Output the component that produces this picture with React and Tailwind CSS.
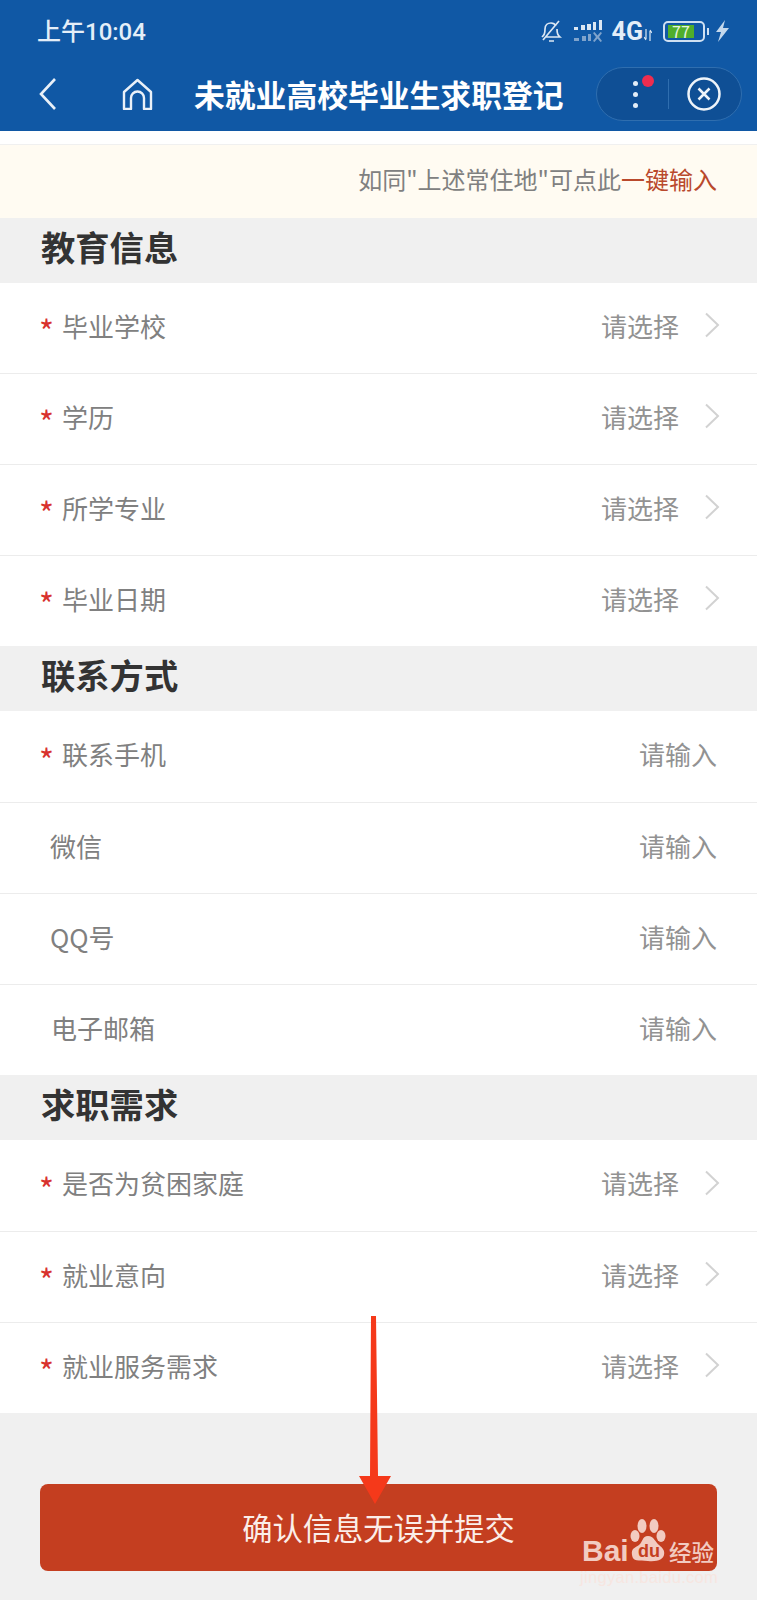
const fontStack = { fontFamily: '"Noto Sans CJK SC", sans-serif' };

const Chevron = () => (
  <svg width="16" height="26" viewBox="0 0 16 26" fill="none" className="ml-[25px] mr-[-3px]">
    <path d="M2 1.500 14 13 2 24.500" stroke="#d2d2d2" strokeWidth="2" />
  </svg>
);

const Row = ({ label, required, value, arrow, last, height = "h-[91px]", indent = "pl-[50px]" }) => (
  <div
    className={`flex items-center bg-white pb-[6px] pr-[40px] ${height} ${
      required ? "pl-[39px]" : indent
    } ${last ? "" : "border-b border-[#ececec]"}`}
  >
    {required && (
      <span className="mr-[10px] mt-[10px] w-[13px] text-[32px] leading-none text-[#d8322e]">*</span>
    )}
    <span className="text-[26px] text-[#808080]">{label}</span>
    <span className="ml-auto text-[26px] text-[#929292]">{value}</span>
    {arrow && <Chevron />}
  </div>
);

const Section = ({ title }) => (
  <div className="flex h-[65px] items-center bg-[#f0f0f0] pb-[8px] pl-[41px] text-[34.300px] font-bold text-[#333333]">
    {title}
  </div>
);

const StatusBar = () => (
  <div className="flex h-[62px] items-center pl-[37px] pr-[27px] text-[#e4eef8]">
    <span
      className="mt-[1px] text-[24px] font-medium"
      style={{ fontFamily: 'Roboto, "Noto Sans CJK SC", sans-serif' }}
    >
      上午10:04
    </span>
    <div className="ml-auto flex items-center">
      <svg width="24" height="24" viewBox="0 0 24 24" fill="none" stroke="#dbe7f3" strokeWidth="1.700">
        <path d="M3 18c2-2 3-3 3-8 0-4 3-6 6-6 2 0 4 1 5 3M18 10c0 5 1 6 3 8H6M10 22h5M4 21 20 2" />
      </svg>
      <svg width="30" height="24" viewBox="0 0 30 24" className="ml-[10px]">
        <g fill="#dbe7f3">
          <rect x="1" y="8" width="4" height="3" />
          <rect x="8" y="6" width="4" height="5" />
          <rect x="14" y="5" width="4" height="6" />
          <rect x="20" y="3" width="3" height="8" />
          <rect x="26" y="1" width="3" height="10" />
        </g>
        <g fill="#7fa3cc">
          <rect x="1" y="19" width="5" height="3" />
          <rect x="9" y="17" width="4" height="5" />
          <rect x="15" y="15" width="3" height="7" />
          <path d="m20 14 1.500-1 3 3.500 3-3.500 1.500 1-3 4 3 4-1.500 1-3-3.500-3 3.500-1.500-1 3-4z" />
        </g>
      </svg>
      <span
        className="ml-[9px] text-[25px] font-bold leading-none text-[#e4eef8]"
        style={{ fontFamily: "Roboto, sans-serif" }}
      >
        4G
      </span>
      <svg width="8" height="12" viewBox="0 0 8 12" className="ml-[1px] mt-[8px]" stroke="#dbe7f3" strokeWidth="1.200" fill="none">
        <path d="M2 0v10M0 8l2 3M6 12V2M8 4 6 1" />
      </svg>
      <div className="ml-[11px] flex h-[21px] w-[42px] items-center rounded-[5px] border-[2.500px] border-[#cfe0f2] pl-[3px]">
        <div className="flex h-[13px] w-[26px] items-center justify-center bg-[#4fae2b] text-[16px] leading-none text-[#e8f5e0]">
          77
        </div>
      </div>
      <div className="ml-[2px] h-[7px] w-[2px] bg-[#cfe0f2]" />
      <svg width="14" height="22" viewBox="0 0 14 22" className="ml-[7px]">
        <path d="M9 0 0 12h5l-3 10 11-14H7z" fill="#c4d8ec" />
      </svg>
    </div>
  </div>
);

const NavBar = () => (
  <div className="flex h-[69px] items-start pl-[39px]">
    <svg width="17" height="32" viewBox="0 0 17 32" fill="none" className="mt-[16px]">
      <path d="M16 1 2 16l14 15" stroke="#e9f0f8" strokeWidth="2.600" />
    </svg>
    <svg width="31" height="32" viewBox="0 0 31 32" fill="none" className="ml-[66px] mt-[16px]">
      <path
        d="M2 31h7V20a6.500 6.500 0 0 1 13 0v11h7V14L15.500 2 2 14z"
        stroke="#e9f0f8"
        strokeWidth="2.400"
        strokeLinejoin="round"
      />
    </svg>
    <h1 className="ml-[41px] mt-[7px] whitespace-nowrap text-[30.800px] font-bold leading-[50px] text-white">
      未就业高校毕业生求职登记
    </h1>
    <div className="ml-[32px] mt-[5px] flex h-[54px] w-[146px] items-center rounded-full border border-[#2f6eaf] bg-[#0f4f95]">
      <div className="relative ml-[36px] flex h-[27px] w-[4px] flex-col justify-between">
        <span className="h-[5px] w-[5px] rounded-full bg-[#e4eef8]" />
        <span className="h-[5px] w-[5px] rounded-full bg-[#e4eef8]" />
        <span className="h-[5px] w-[5px] rounded-full bg-[#e4eef8]" />
        <span className="absolute left-[9px] top-[-6px] h-[12px] w-[12px] rounded-full bg-[#ee2d4f]" />
      </div>
      <div className="ml-[31px] h-[30px] w-px bg-[#2f6eaf]" />
      <svg width="34" height="34" viewBox="0 0 34 34" fill="none" className="ml-[18px]" stroke="#eef4fa">
        <circle cx="17" cy="17" r="15.500" strokeWidth="2.500" />
        <path d="m11.500 11.500 11 11m0-11-11 11" strokeWidth="2.500" />
      </svg>
    </div>
  </div>
);

const Watermark = () => (
  <div className="absolute left-[581px] top-[1517px] h-[70px] w-[140px] text-[#f2cbc1]">
    <svg width="40" height="44" viewBox="0 0 40 44" className="absolute left-[47px] top-[2px]" fill="#f2cbc1">
      <ellipse cx="7" cy="17" rx="4.500" ry="6" />
      <ellipse cx="14" cy="7" rx="4.500" ry="7" />
      <ellipse cx="26" cy="7" rx="4.500" ry="7" />
      <ellipse cx="33" cy="17" rx="4.500" ry="6" />
      <path d="M20 17c6 0 7 6 11 9s6 6 5 10-6 7-16 6-15 1-16-6 3-7 7-10 3-9 9-9z" />
    </svg>
    <span
      className="absolute left-[1px] top-[16px] text-[30px] font-bold leading-[36px]"
      style={{ fontFamily: '"Liberation Sans", sans-serif' }}
    >
      Bai
    </span>
    <span
      className="absolute left-[57px] top-[23px] text-[18px] font-bold leading-[22px] text-[#c43e20]"
      style={{ fontFamily: '"Liberation Sans", sans-serif' }}
    >
      du
    </span>
    <span className="absolute left-[88px] top-[16px] text-[22.500px] font-medium leading-[36px]">经验</span>
    <span
      className="absolute left-[-1px] top-[50px] whitespace-nowrap text-[16.500px] leading-[20px] tracking-[0.300px] text-[#f7e6e1]"
      style={{ fontFamily: '"Liberation Sans", sans-serif' }}
    >
      jingyan.baidu.com
    </span>
  </div>
);

const Arrow = () => (
  <svg width="40" height="192" viewBox="0 0 40 192" className="absolute left-[355px] top-[1314px]">
    <path d="M16 2h5l2 160h13l-16 28-16-28h11z" fill="#f5391a" />
  </svg>
);

const App = () => {
  return (
    <div className="relative h-[1600px] w-[757px] overflow-hidden bg-[#f0f0f0]" style={fontStack}>
      <div className="h-[131px] bg-[#1058a5]">
        <StatusBar />
        <NavBar />
      </div>
      <div className="h-[14px] border-b border-[#f0f0f0] bg-white" />
      <div className="flex h-[73px] items-center justify-end bg-[#fffbf2] pb-[6px] pr-[40px] text-[24px] text-[#808080]">
        如同"上述常住地"可点此<span className="text-[#b9492c]">一键输入</span>
      </div>

      <Section title="教育信息" />
      <Row label="毕业学校" value="请选择" required arrow />
      <Row label="学历" value="请选择" required arrow />
      <Row label="所学专业" value="请选择" required arrow />
      <Row label="毕业日期" value="请选择" required arrow last height="h-[90px]" />

      <Section title="联系方式" />
      <Row label="联系手机" value="请输入" required height="h-[92px]" />
      <Row label="微信" value="请输入" />
      <Row label="QQ号" value="请输入" />
      <Row label="电子邮箱" value="请输入" indent="pl-[51px]" last height="h-[90px]" />

      <Section title="求职需求" />
      <Row label="是否为贫困家庭" value="请选择" required arrow height="h-[92px]" />
      <Row label="就业意向" value="请选择" required arrow />
      <Row label="就业服务需求" value="请选择" required arrow last height="h-[90px]" />

      <div className="px-[40px] pt-[71px]">
        <button className="h-[87px] w-full rounded-[8px] bg-[#c43e20] text-[30.300px] text-[#fbeee9]">
          确认信息无误并提交
        </button>
      </div>

      <Arrow />
      <Watermark />
    </div>
  );
};

export default App;
